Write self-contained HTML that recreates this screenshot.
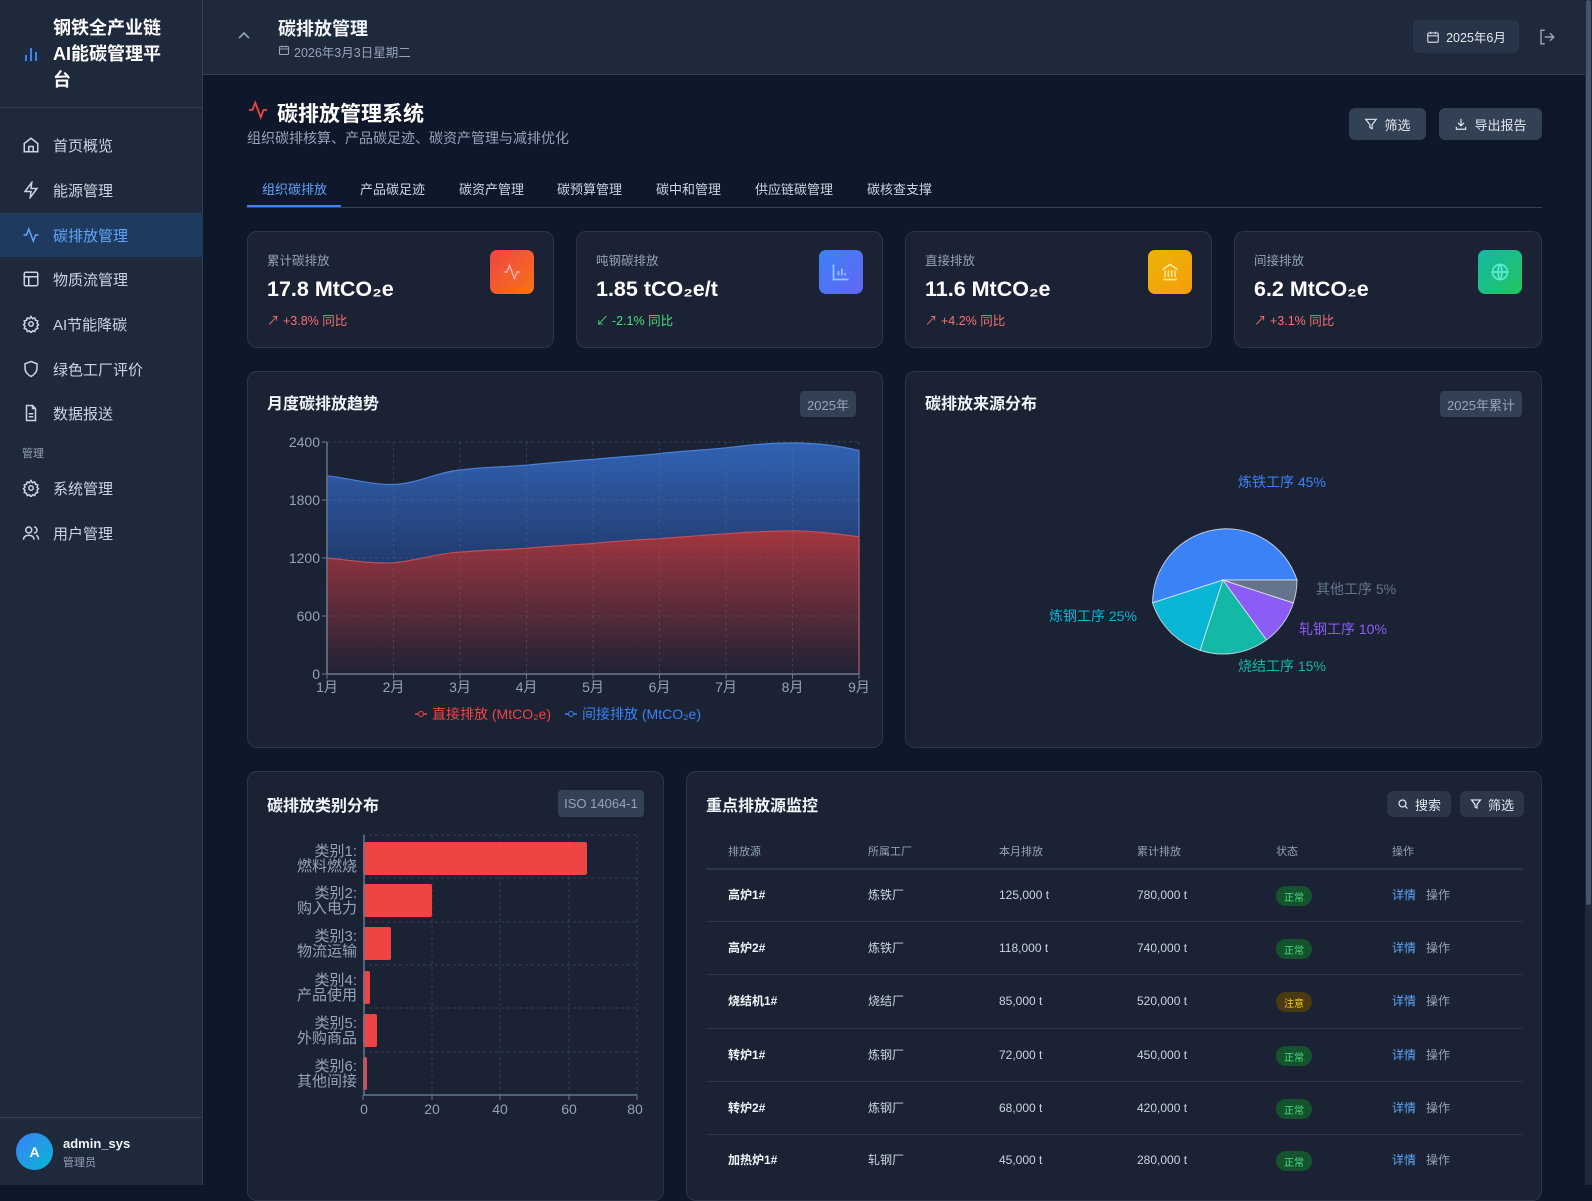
<!DOCTYPE html>
<html><head><meta charset="utf-8">
<style>
*{margin:0;padding:0;box-sizing:border-box}
body{width:1592px;height:1185px;overflow:hidden;background:#0f172a;font-family:"Liberation Sans","Noto Sans CJK SC",sans-serif;color:#e2e8f0;position:relative}
.a{position:absolute;white-space:nowrap}
.side{position:absolute;left:0;top:0;width:203px;height:1185px;background:#1e293b;border-right:1px solid #334155}
.nav{position:absolute;left:0;width:203px;height:44px;display:flex;align-items:center;font-size:15px;color:#cbd5e1}
.nav svg{position:absolute;left:22px}
.nav span{position:absolute;left:53px}
.card{position:absolute;background:#1a2234;border:1px solid #2b3648;border-radius:10px}
.lbl{font-size:12.5px;color:#94a3b8}
.val{font-size:21.5px;font-weight:bold;color:#fff}
.ib{position:absolute;width:44px;height:44px;border-radius:7px;display:flex;align-items:center;justify-content:center}
.ttl{font-size:16px;font-weight:bold;color:#f1f5f9}
.badge{position:absolute;background:#334155;color:#94a3b8;font-size:13px;border-radius:4px;display:flex;align-items:center;justify-content:center}
.btn{position:absolute;background:#334155;color:#e2e8f0;font-size:13px;border-radius:6px;display:flex;align-items:center;justify-content:center;gap:6px}
.th{font-size:11px;color:#94a3b8}
.td{font-size:12px;color:#cbd5e1;line-height:16px}
.ok{position:absolute;width:36px;height:20px;border-radius:10px;background:#14532d;color:#4ade80;font-size:10px;display:flex;align-items:center;justify-content:center}
</style></head><body>

<div class="side">
  <svg class="a" style="left:24px;top:46px" width="16" height="16" viewBox="0 0 16 16" stroke="#3b82f6" stroke-width="2" fill="none"><path d="M2 15V9M7 15V2M12 15V6"/></svg>
  <div class="a" style="left:53px;top:15px;font-size:18px;font-weight:bold;color:#fff;line-height:26px;white-space:normal;width:114px">钢铁全产业链AI能碳管理平台</div>
  <div class="a" style="left:0;top:107px;width:203px;height:1px;background:#334155"></div>

  <div class="nav" style="top:123px"><svg width="18" height="18" viewBox="0 0 24 24" fill="none" stroke="#cbd5e1" stroke-width="2"><path d="M3 10l9-7 9 7v11H3z"/><path d="M9 21v-7h6v7"/></svg><span>首页概览</span></div>
  <div class="nav" style="top:168px"><svg width="18" height="18" viewBox="0 0 24 24" fill="none" stroke="#cbd5e1" stroke-width="2"><path d="M13 2L4 14h8l-1 8 9-12h-8z"/></svg><span>能源管理</span></div>
  <div class="nav" style="top:213px;background:#1e3a5f;color:#60a5fa"><svg width="18" height="18" viewBox="0 0 24 24" fill="none" stroke="#60a5fa" stroke-width="2"><path d="M2 12h4l3-8 6 16 3-8h4"/></svg><span>碳排放管理</span></div>
  <div class="nav" style="top:257px"><svg width="18" height="18" viewBox="0 0 24 24" fill="none" stroke="#cbd5e1" stroke-width="2"><rect x="3" y="3" width="18" height="18" rx="2"/><path d="M3 9h18M9 9v12"/></svg><span>物质流管理</span></div>
  <div class="nav" style="top:302px"><svg width="18" height="18" viewBox="0 0 24 24" fill="none" stroke="#cbd5e1" stroke-width="2"><circle cx="12" cy="12" r="3"/><path d="M12 2l2 3 3-1 1 3 3 1-1 3 2 2-2 2 1 3-3 1-1 3-3-1-2 3-2-3-3 1-1-3-3-1 1-3-2-2 2-2-1-3 3-1 1-3 3 1z"/></svg><span>AI节能降碳</span></div>
  <div class="nav" style="top:347px"><svg width="18" height="18" viewBox="0 0 24 24" fill="none" stroke="#cbd5e1" stroke-width="2"><path d="M12 2l8 3v6c0 5-4 9-8 11-4-2-8-6-8-11V5z"/></svg><span>绿色工厂评价</span></div>
  <div class="nav" style="top:391px"><svg width="18" height="18" viewBox="0 0 24 24" fill="none" stroke="#cbd5e1" stroke-width="2"><path d="M14 2H6v20h12V6z"/><path d="M14 2v4h4M9 13h6M9 17h6"/></svg><span>数据报送</span></div>
  <div class="a" style="left:22px;top:445px;font-size:11px;color:#94a3b8">管理</div>
  <div class="nav" style="top:466px"><svg width="18" height="18" viewBox="0 0 24 24" fill="none" stroke="#cbd5e1" stroke-width="2"><circle cx="12" cy="12" r="3"/><path d="M12 2l2 3 3-1 1 3 3 1-1 3 2 2-2 2 1 3-3 1-1 3-3-1-2 3-2-3-3 1-1-3-3-1 1-3-2-2 2-2-1-3 3-1 1-3 3 1z"/></svg><span>系统管理</span></div>
  <div class="nav" style="top:511px"><svg width="18" height="18" viewBox="0 0 24 24" fill="none" stroke="#cbd5e1" stroke-width="2"><circle cx="9" cy="8" r="4"/><path d="M2 21c0-4 3-6 7-6s7 2 7 6M16 4a4 4 0 010 8M19 15c2 1 3 3 3 6"/></svg><span>用户管理</span></div>

  <div class="a" style="left:0;top:1117px;width:203px;height:1px;background:#334155"></div>
  <div class="a" style="left:16px;top:1133px;width:37px;height:37px;border-radius:50%;background:linear-gradient(135deg,#3b82f6,#06b6d4);color:#fff;font-size:14px;font-weight:bold;display:flex;align-items:center;justify-content:center">A</div>
  <div class="a" style="left:63px;top:1136px;font-size:13px;font-weight:bold;color:#f1f5f9">admin_sys</div>
  <div class="a" style="left:63px;top:1154px;font-size:11px;color:#94a3b8">管理员</div>
</div>

<!-- header -->
<div class="a" style="left:203px;top:0;width:1389px;height:75px;background:#1e293b;border-bottom:1px solid #334155"></div>
<svg class="a" style="left:237px;top:31px" width="14" height="10" viewBox="0 0 14 10" fill="none" stroke="#94a3b8" stroke-width="1.6"><path d="M2 7l5-5 5 5"/></svg>
<div class="a" style="left:278px;top:15px;font-size:18px;font-weight:bold;color:#f1f5f9">碳排放管理</div>
<svg class="a" style="left:278px;top:44px" width="12" height="12" viewBox="0 0 24 24" fill="none" stroke="#94a3b8" stroke-width="2.2"><rect x="3" y="5" width="18" height="16" rx="2"/><path d="M3 10h18M8 3v4M16 3v4"/></svg>
<div class="a" style="left:294px;top:42px;font-size:12.5px;color:#94a3b8">2026年3月3日星期二</div>
<div class="btn" style="left:1413px;top:20px;width:106px;height:33px;background:#283548;font-size:12.5px"><svg width="14" height="14" viewBox="0 0 24 24" fill="none" stroke="#cbd5e1" stroke-width="2"><rect x="3" y="5" width="18" height="16" rx="2"/><path d="M3 10h18M8 3v4M16 3v4"/></svg>2025年6月</div>
<svg class="a" style="left:1538px;top:28px" width="18" height="18" viewBox="0 0 24 24" fill="none" stroke="#94a3b8" stroke-width="2"><path d="M9 3H4v18h5M16 7l5 5-5 5M21 12H9"/></svg>

<!-- page title -->
<svg class="a" style="left:247px;top:99px" width="22" height="22" viewBox="0 0 24 24" fill="none" stroke="#ef4444" stroke-width="2"><path d="M2 12h4l3-8 6 16 3-8h4"/></svg>
<div class="a" style="left:277px;top:98px;font-size:21px;font-weight:bold;color:#fff">碳排放管理系统</div>
<div class="a" style="left:247px;top:128px;font-size:14px;color:#94a3b8">组织碳排核算、产品碳足迹、碳资产管理与减排优化</div>
<div class="btn" style="left:1349px;top:108px;width:77px;height:32px"><svg width="14" height="14" viewBox="0 0 24 24" fill="none" stroke="#e2e8f0" stroke-width="2"><path d="M3 4h18l-7 9v7l-4-2v-5z"/></svg>筛选</div>
<div class="btn" style="left:1439px;top:108px;width:103px;height:32px"><svg width="14" height="14" viewBox="0 0 24 24" fill="none" stroke="#e2e8f0" stroke-width="2"><path d="M12 3v12M7 10l5 5 5-5M4 17v4h16v-4"/></svg>导出报告</div>

<!-- tabs -->
<div class="a" style="left:247px;top:207px;width:1295px;height:1px;background:#334155"></div>
<div class="a" style="left:247px;top:205px;width:94px;height:2px;background:#3b82f6"></div>
<div class="a" style="top:179px;left:262px;font-size:13px;color:#60a5fa">组织碳排放</div>
<div class="a" style="top:179px;left:360px;font-size:13px;color:#cbd5e1">产品碳足迹</div>
<div class="a" style="top:179px;left:459px;font-size:13px;color:#cbd5e1">碳资产管理</div>
<div class="a" style="top:179px;left:557px;font-size:13px;color:#cbd5e1">碳预算管理</div>
<div class="a" style="top:179px;left:656px;font-size:13px;color:#cbd5e1">碳中和管理</div>
<div class="a" style="top:179px;left:755px;font-size:13px;color:#cbd5e1">供应链碳管理</div>
<div class="a" style="top:179px;left:867px;font-size:13px;color:#cbd5e1">碳核查支撑</div>

<!-- stat cards -->
<div class="card" style="left:247px;top:231px;width:307px;height:117px">
  <div class="a lbl" style="left:19px;top:18px">累计碳排放</div>
  <div class="a val" style="left:19px;top:45px">17.8 MtCO₂e</div>
  <div class="a" style="left:19px;top:78px;font-size:12.5px;color:#f87171">↗ +3.8% 同比</div>
  <div class="ib" style="right:19px;top:18px;background:linear-gradient(135deg,#ef4444,#f97316)"><svg width="20" height="20" viewBox="0 0 24 24" fill="none" stroke="#fca5a5" stroke-width="2"><path d="M2 12h4l3-8 6 16 3-8h4"/></svg></div>
</div>
<div class="card" style="left:576px;top:231px;width:307px;height:117px">
  <div class="a lbl" style="left:19px;top:18px">吨钢碳排放</div>
  <div class="a val" style="left:19px;top:45px">1.85 tCO₂e/t</div>
  <div class="a" style="left:19px;top:78px;font-size:12.5px;color:#4ade80">↙ -2.1% 同比</div>
  <div class="ib" style="right:19px;top:18px;background:linear-gradient(135deg,#3b82f6,#6366f1)"><svg width="20" height="20" viewBox="0 0 24 24" fill="none" stroke="#93c5fd" stroke-width="2"><path d="M3 3v18h18M9 16v-5M13 16V8M17 16v-3"/></svg></div>
</div>
<div class="card" style="left:905px;top:231px;width:307px;height:117px">
  <div class="a lbl" style="left:19px;top:18px">直接排放</div>
  <div class="a val" style="left:19px;top:45px">11.6 MtCO₂e</div>
  <div class="a" style="left:19px;top:78px;font-size:12.5px;color:#f87171">↗ +4.2% 同比</div>
  <div class="ib" style="right:19px;top:18px;background:linear-gradient(135deg,#eab308,#f59e0b)"><svg width="20" height="20" viewBox="0 0 24 24" fill="none" stroke="#fde68a" stroke-width="2"><path d="M3 9l9-6 9 6M4 21h16M6 10v8M10 10v8M14 10v8M18 10v8"/></svg></div>
</div>
<div class="card" style="left:1234px;top:231px;width:308px;height:117px">
  <div class="a lbl" style="left:19px;top:18px">间接排放</div>
  <div class="a val" style="left:19px;top:45px">6.2 MtCO₂e</div>
  <div class="a" style="left:19px;top:78px;font-size:12.5px;color:#f87171">↗ +3.1% 同比</div>
  <div class="ib" style="right:19px;top:18px;background:linear-gradient(135deg,#14b8a6,#22c55e)"><svg width="20" height="20" viewBox="0 0 24 24" fill="none" stroke="#5eead4" stroke-width="2"><circle cx="12" cy="12" r="9"/><path d="M3 12h18M12 3c3 3 3 15 0 18M12 3c-3 3-3 15 0 18"/></svg></div>
</div>

<!-- chart cards -->
<div class="card" style="left:247px;top:371px;width:636px;height:377px">
  <div class="a ttl" style="left:19px;top:18px">月度碳排放趋势</div>
  <div class="badge" style="right:26px;top:19px;width:56px;height:26px">2025年</div>
</div>
<div class="card" style="left:905px;top:371px;width:637px;height:377px">
  <div class="a ttl" style="left:19px;top:18px">碳排放来源分布</div>
  <div class="badge" style="right:19px;top:19px;width:82px;height:26px">2025年累计</div>
</div>

<!-- bottom cards -->
<div class="card" style="left:247px;top:771px;width:417px;height:430px">
  <div class="a ttl" style="left:19px;top:20px">碳排放类别分布</div>
  <div class="badge" style="right:19px;top:18px;width:86px;height:27px">ISO 14064-1</div>
</div>
<div class="card" style="left:686px;top:771px;width:856px;height:430px">
  <div class="a ttl" style="left:19px;top:20px">重点排放源监控</div>
  <div class="btn" style="left:700px;top:19px;width:64px;height:26px;background:#2b3648"><svg width="12" height="12" viewBox="0 0 24 24" fill="none" stroke="#e2e8f0" stroke-width="2.4"><circle cx="11" cy="11" r="7"/><path d="M16 16l5 5"/></svg>搜索</div>
  <div class="btn" style="left:773px;top:19px;width:64px;height:26px;background:#2b3648"><svg width="12" height="12" viewBox="0 0 24 24" fill="none" stroke="#e2e8f0" stroke-width="2.4"><path d="M3 4h18l-7 9v7l-4-2v-5z"/></svg>筛选</div>
</div>

<!-- table -->
<div class="a th" style="left:728px;top:843px">排放源</div>
<div class="a th" style="left:868px;top:843px">所属工厂</div>
<div class="a th" style="left:999px;top:843px">本月排放</div>
<div class="a th" style="left:1137px;top:843px">累计排放</div>
<div class="a th" style="left:1276px;top:843px">状态</div>
<div class="a th" style="left:1392px;top:843px">操作</div>
<div class="a" style="left:706px;top:868px;width:817px;height:2px;background:#2b3648"></div>

<div class="a" style="left:706px;top:921px;width:817px;height:1px;background:#2b3648"></div>
<div class="a" style="left:706px;top:974px;width:817px;height:1px;background:#2b3648"></div>
<div class="a" style="left:706px;top:1028px;width:817px;height:1px;background:#2b3648"></div>
<div class="a" style="left:706px;top:1081px;width:817px;height:1px;background:#2b3648"></div>
<div class="a" style="left:706px;top:1134px;width:817px;height:1px;background:#2b3648"></div>

<div class="a td" style="left:728px;top:887px;font-weight:bold;color:#f1f5f9">高炉1#</div><div class="a td" style="left:868px;top:887px">炼铁厂</div><div class="a td" style="left:999px;top:887px">125,000 t</div><div class="a td" style="left:1137px;top:887px">780,000 t</div><div class="ok" style="left:1276px;top:886px">正常</div><div class="a td" style="left:1392px;top:887px"><span style="color:#60a5fa">详情</span>&nbsp;&nbsp;&nbsp;<span style="color:#94a3b8">操作</span></div>
<div class="a td" style="left:728px;top:940px;font-weight:bold;color:#f1f5f9">高炉2#</div><div class="a td" style="left:868px;top:940px">炼铁厂</div><div class="a td" style="left:999px;top:940px">118,000 t</div><div class="a td" style="left:1137px;top:940px">740,000 t</div><div class="ok" style="left:1276px;top:939px">正常</div><div class="a td" style="left:1392px;top:940px"><span style="color:#60a5fa">详情</span>&nbsp;&nbsp;&nbsp;<span style="color:#94a3b8">操作</span></div>
<div class="a td" style="left:728px;top:993px;font-weight:bold;color:#f1f5f9">烧结机1#</div><div class="a td" style="left:868px;top:993px">烧结厂</div><div class="a td" style="left:999px;top:993px">85,000 t</div><div class="a td" style="left:1137px;top:993px">520,000 t</div><div class="ok" style="left:1276px;top:992px;background:#4a3a12;color:#facc15">注意</div><div class="a td" style="left:1392px;top:993px"><span style="color:#60a5fa">详情</span>&nbsp;&nbsp;&nbsp;<span style="color:#94a3b8">操作</span></div>
<div class="a td" style="left:728px;top:1047px;font-weight:bold;color:#f1f5f9">转炉1#</div><div class="a td" style="left:868px;top:1047px">炼钢厂</div><div class="a td" style="left:999px;top:1047px">72,000 t</div><div class="a td" style="left:1137px;top:1047px">450,000 t</div><div class="ok" style="left:1276px;top:1046px">正常</div><div class="a td" style="left:1392px;top:1047px"><span style="color:#60a5fa">详情</span>&nbsp;&nbsp;&nbsp;<span style="color:#94a3b8">操作</span></div>
<div class="a td" style="left:728px;top:1100px;font-weight:bold;color:#f1f5f9">转炉2#</div><div class="a td" style="left:868px;top:1100px">炼钢厂</div><div class="a td" style="left:999px;top:1100px">68,000 t</div><div class="a td" style="left:1137px;top:1100px">420,000 t</div><div class="ok" style="left:1276px;top:1099px">正常</div><div class="a td" style="left:1392px;top:1100px"><span style="color:#60a5fa">详情</span>&nbsp;&nbsp;&nbsp;<span style="color:#94a3b8">操作</span></div>
<div class="a td" style="left:728px;top:1152px;font-weight:bold;color:#f1f5f9">加热炉1#</div><div class="a td" style="left:868px;top:1152px">轧钢厂</div><div class="a td" style="left:999px;top:1152px">45,000 t</div><div class="a td" style="left:1137px;top:1152px">280,000 t</div><div class="ok" style="left:1276px;top:1151px">正常</div><div class="a td" style="left:1392px;top:1152px"><span style="color:#60a5fa">详情</span>&nbsp;&nbsp;&nbsp;<span style="color:#94a3b8">操作</span></div>

<!-- charts overlay -->
<svg class="a" style="left:0;top:0" width="1592" height="1185" font-family="Liberation Sans, Noto Sans CJK SC, sans-serif">
<defs>
<linearGradient id="gb" x1="0" x2="0" gradientUnits="userSpaceOnUse" y1="442" y2="600"><stop offset="0" stop-color="#3262b4"/><stop offset="1" stop-color="#1b2f58"/></linearGradient>
<linearGradient id="gr" x1="0" x2="0" gradientUnits="userSpaceOnUse" y1="530" y2="674"><stop offset="0" stop-color="#a3363f"/><stop offset="1" stop-color="#1f2234"/></linearGradient>
</defs>
<path fill="url(#gb)" stroke="#4a7fd6" stroke-width="1.2" d="M327 475.8C349 478 371 485 393.5 484.5C416 484 438 472 460 470C482 467 504 467 526.5 465.2C549 463 571 461 593 459.4C615 457 637 456 659.5 453.6C682 451 704 450 726 447.8C748 445 770 443 792.5 443C815 443 837 445 859 450.7V674H327Z"/>
<path fill="url(#gr)" stroke="#c0505a" stroke-width="1.2" d="M327 558C349 560 371 564 393.5 562.8C416 561 438 553 460 552.2C482 550 504 550 526.5 548.3C549 546 571 545 593 543.5C615 541 637 540 659.5 538.7C682 537 704 535 726 533.8C748 532 770 531 792.5 530.9C815 531 837 534 859 536.7V674H327Z"/>
<g stroke="#64748b" stroke-opacity=".35" stroke-dasharray="3 3" stroke-width="1">
<path d="M327 442H859M327 500H859M327 558H859M327 616H859"/>
<path d="M393.5 442V674M460 442V674M526.5 442V674M593 442V674M659.5 442V674M726 442V674M792.5 442V674M859 442V674"/>
</g>
<path d="M327 442V674H859" stroke="#64748b" stroke-width="1.5" fill="none"/>
<g stroke="#64748b"><path d="M322 442h5M322 500h5M322 558h5M322 616h5M322 674h5"/><path d="M327 674v5M393.5 674v5M460 674v5M526.5 674v5M593 674v5M659.5 674v5M726 674v5M792.5 674v5M859 674v5"/></g>
<g fill="#94a3b8" font-size="14" text-anchor="end"><text x="320" y="447">2400</text><text x="320" y="505">1800</text><text x="320" y="563">1200</text><text x="320" y="621">600</text><text x="320" y="679">0</text></g>
<g fill="#94a3b8" font-size="14" text-anchor="middle"><text x="327" y="692">1月</text><text x="393.5" y="692">2月</text><text x="460" y="692">3月</text><text x="526.5" y="692">4月</text><text x="593" y="692">5月</text><text x="659.5" y="692">6月</text><text x="726" y="692">7月</text><text x="792.5" y="692">8月</text><text x="859" y="692">9月</text></g>
<g font-size="14"><path d="M415 714h12" stroke="#ef4444" stroke-width="1.5"/><circle cx="421" cy="714" r="2.5" fill="#1a2234" stroke="#ef4444"/><text x="432" y="719" fill="#ef4444">直接排放 (MtCO₂e)</text>
<path d="M565 714h12" stroke="#3b82f6" stroke-width="1.5"/><circle cx="571" cy="714" r="2.5" fill="#1a2234" stroke="#3b82f6"/><text x="582" y="719" fill="#3b82f6">间接排放 (MtCO₂e)</text></g>

<!-- pie -->
<g stroke="#e2e8f0" stroke-width="1" stroke-opacity=".8">
<path fill="#3b82f6" d="M1223 580L1297 580A74 74 0 0 0 1152.6 602.9Z"/>
<path fill="#06b6d4" d="M1223 580L1152.6 602.9A74 74 0 0 0 1200.1 650.4Z"/>
<path fill="#14b8a6" d="M1223 580L1200.1 650.4A74 74 0 0 0 1266.5 639.9Z"/>
<path fill="#8b5cf6" d="M1223 580L1266.5 639.9A74 74 0 0 0 1293.4 602.9Z"/>
<path fill="#64748b" d="M1223 580L1293.4 602.9A74 74 0 0 0 1297 580Z"/>
</g>
<g font-size="14"><text x="1238" y="487" fill="#3b82f6">炼铁工序 45%</text><text x="1316" y="594" fill="#64748b">其他工序 5%</text><text x="1299" y="634" fill="#8b5cf6">轧钢工序 10%</text><text x="1238" y="671" fill="#14b8a6">烧结工序 15%</text><text x="1049" y="621" fill="#06b6d4">炼钢工序 25%</text></g>

<!-- bar chart -->
<g stroke="#334155" stroke-dasharray="3 3"><path d="M363 835H637M363 878H637M363 922H637M363 965H637M363 1008H637M363 1052H637"/><path d="M432 835V1095M500 835V1095M569 835V1095M637 835V1095"/></g>
<g fill="#ef4444"><rect x="363" y="842" width="224" height="33" rx="2"/><rect x="363" y="884" width="69" height="33" rx="2"/><rect x="363" y="927" width="28" height="33" rx="2"/><rect x="363" y="971" width="7" height="33" rx="2"/><rect x="363" y="1014" width="14" height="33" rx="2"/><rect x="363" y="1057" width="4" height="33" rx="2"/></g>
<path d="M364 835V1095H637" stroke="#64748b" stroke-width="1.5" fill="none"/>
<g stroke="#64748b"><path d="M363 1095v5M432 1095v5M500 1095v5M569 1095v5M637 1095v5"/></g>
<g fill="#94a3b8" font-size="14" text-anchor="middle"><text x="364" y="1114">0</text><text x="432" y="1114">20</text><text x="500" y="1114">40</text><text x="569" y="1114">60</text><text x="635" y="1114">80</text></g>
<g fill="#94a3b8" font-size="15" text-anchor="end">
<text x="357" y="856">类别1:</text><text x="357" y="871">燃料燃烧</text>
<text x="357" y="898">类别2:</text><text x="357" y="913">购入电力</text>
<text x="357" y="941">类别3:</text><text x="357" y="956">物流运输</text>
<text x="357" y="985">类别4:</text><text x="357" y="1000">产品使用</text>
<text x="357" y="1028">类别5:</text><text x="357" y="1043">外购商品</text>
<text x="357" y="1071">类别6:</text><text x="357" y="1086">其他间接</text>
</g>
</svg>

<!-- scrollbar -->
<div class="a" style="left:1585px;top:0;width:7px;height:1185px;background:#1e293b"></div>
<div class="a" style="left:1586px;top:0;width:5px;height:905px;background:#475569;border-radius:3px"></div>
</body></html>
